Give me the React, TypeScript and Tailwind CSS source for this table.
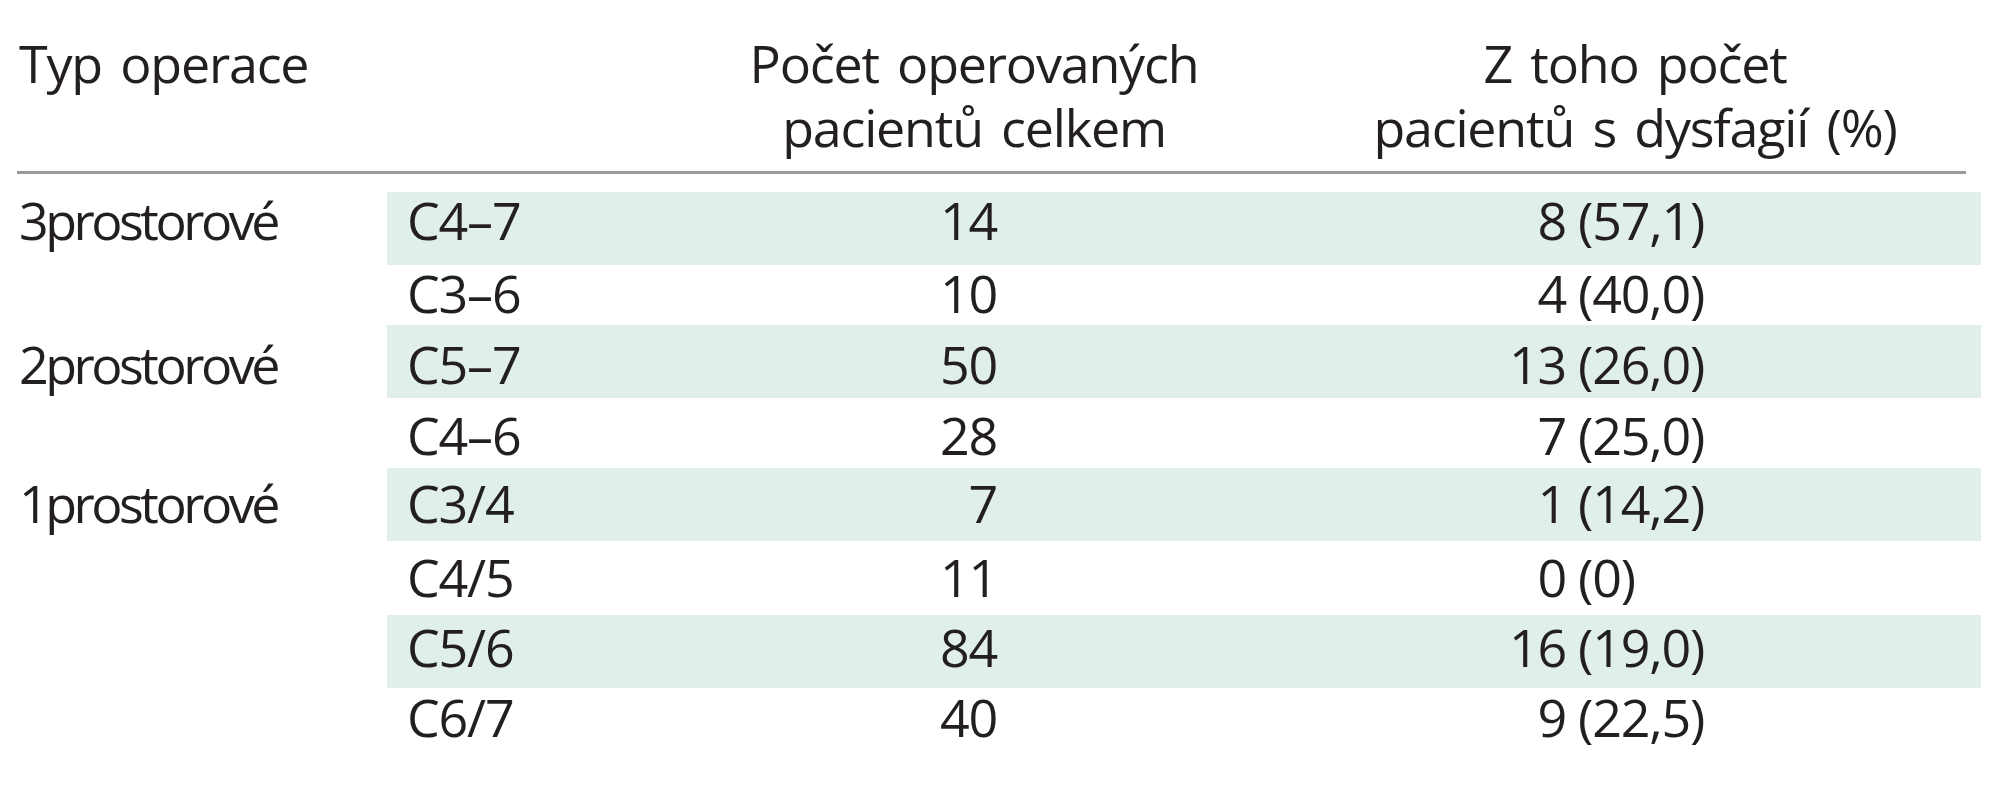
import React from "react";

type Row = {
  label: string;
  code: string;
  n: string;
  d: string;
  p: string;
  shade: boolean;
  cls: string;
};

const rows: Row[] = [
  { label: "3prostorové", code: "C4–7", n: "14", d: "8", p: "(57,1)", shade: true, cls: "h-[73px] pt-[0px]" },
  { label: "", code: "C3–6", n: "10", d: "4", p: "(40,0)", shade: false, cls: "h-[60px] pt-[0px]" },
  { label: "2prostorové", code: "C5–7", n: "50", d: "13", p: "(26,0)", shade: true, cls: "h-[73px] pt-[11px]" },
  { label: "", code: "C4–6", n: "28", d: "7", p: "(25,0)", shade: false, cls: "h-[70px] pt-[9px]" },
  { label: "1prostorové", code: "C3/4", n: "7", d: "1", p: "(14,2)", shade: true, cls: "h-[73px] pt-[7px]" },
  { label: "", code: "C4/5", n: "11", d: "0", p: "(0)", shade: false, cls: "h-[74px] pt-[8px]" },
  { label: "", code: "C5/6", n: "84", d: "16", p: "(19,0)", shade: true, cls: "h-[73px] pt-[4px]" },
  { label: "", code: "C6/7", n: "40", d: "9", p: "(22,5)", shade: false, cls: "h-[73px] pt-[1px]" },
];

export default function App() {
  return (
    <div
      className="w-[1991px] h-[800px] bg-white text-[#231f20] text-[52px] tracking-[-1.2px] [word-spacing:6px] overflow-hidden"
      style={{ fontFamily: '"Open Sans", "Noto Sans", sans-serif' }}
    >
      <div className="pl-[17px] pr-[10px]">
        {/* header */}
        <div className="flex pt-[31px] leading-[64px]">
          <div className="w-[370px] pl-[2px] whitespace-nowrap">Typ operace</div>
          <div className="ml-[337px] w-[500px] text-center">
            <div>Počet operovaných</div>
            <div>pacientů celkem</div>
          </div>
          <div className="ml-[66px] w-[690px] text-center">
            <div>Z toho počet</div>
            <div>pacientů s dysfagií (%)</div>
          </div>
        </div>
        <div className="mt-[12px] mr-[15px] h-[3px] bg-[#9a9a9a]" />
        <div className="mt-[18px]">
          {rows.map((r, i) => (
            <div key={i} className="flex leading-[56px]">
              <div className={`w-[370px] pl-[2px] whitespace-nowrap tracking-[-3.5px] ${r.cls}`}>{r.label}</div>
              <div className={`flex flex-1 ${r.cls} ${r.shade ? "bg-[#e1efeb]" : ""}`}>
                <div className="w-[337px] pl-[20px] whitespace-nowrap">{r.code}</div>
                <div className="w-[273px] text-right">{r.n}</div>
                <div className="w-[569px] text-right">{r.d}</div>
                <div className="pl-[12px] whitespace-nowrap">{r.p}</div>
              </div>
            </div>
          ))}
        </div>
      </div>
    </div>
  );
}
